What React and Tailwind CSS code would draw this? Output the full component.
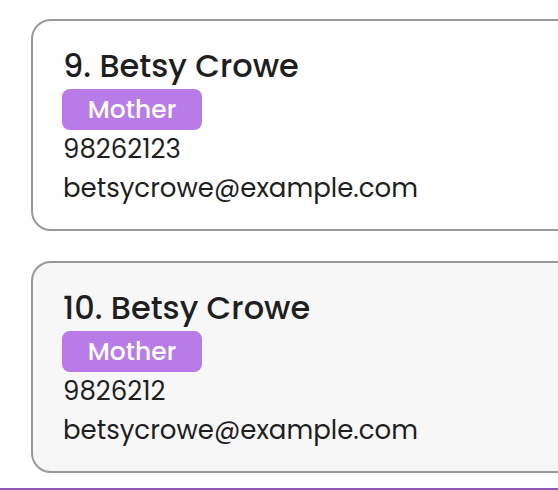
import React from "react";

const contacts = [
  { id: 9, name: "Betsy Crowe", tag: "Mother", phone: "98262123", email: "betsycrowe@example.com", bg: "bg-white" },
  { id: 10, name: "Betsy Crowe", tag: "Mother", phone: "9826212", email: "betsycrowe@example.com", bg: "bg-[#f7f7f7]" },
];

const ContactCard = ({ c }) => (
  <div
    className={`ml-[31px] w-[600px] h-[212px] shrink-0 rounded-[20px] border-2 border-[#999999] ${c.bg} pl-[30px] pt-[25px]`}
  >
    <div className="text-[32px] leading-[40px] font-medium text-[#1f1f1f]">
      {c.id}. {c.name}
    </div>
    <div className="mt-[3px] -ml-[1px] flex">
      <span className="h-[41px] w-[140px] text-center rounded-[8px] bg-[#b97be8] text-white text-[25px] leading-[41px] font-medium">
        {c.tag}
      </span>
    </div>
    <div className="text-[26px] leading-[39px] text-[#1f1f1f]">{c.phone}</div>
    <div className="text-[26px] leading-[39px] text-[#1f1f1f]">{c.email}</div>
  </div>
);

export default function App() {
  return (
    <div
      className="w-[558px] h-[490px] overflow-hidden bg-white flex flex-col"
      style={{ fontFamily: "Poppins, Inter, 'Noto Sans', sans-serif" }}
    >
      <div className="flex flex-col gap-[30px] pt-[19px]">
        {contacts.map((c) => (
          <ContactCard key={c.id} c={c} />
        ))}
      </div>
      <div className="mt-auto h-[2px] bg-[#8c58b6]" />
    </div>
  );
}
